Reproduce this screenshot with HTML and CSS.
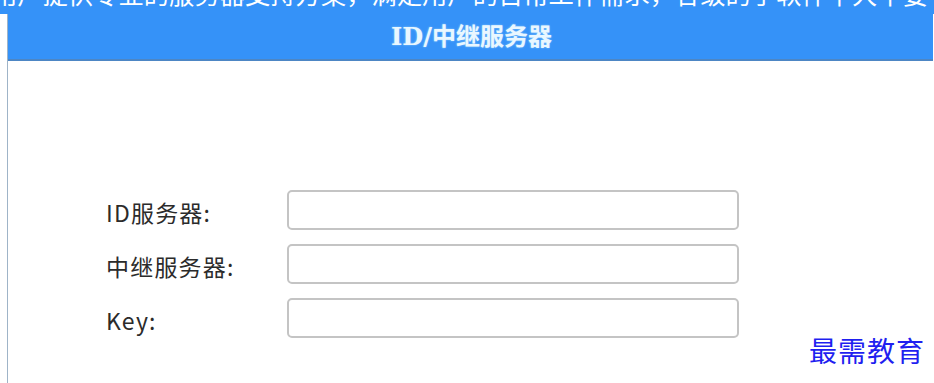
FILE: index.html
```html
<!DOCTYPE html>
<html lang="zh-CN">
<head>
    <meta charset="UTF-8">
    <meta name="viewport" content="width=device-width, initial-scale=1.0">
    <title>ID/中继服务器</title>
    <link rel="stylesheet" href="styles.css">
</head>
<body>
    <div class="intro">
        <p>用户提供专业的服务器支持方案，满足用户的日常工作需求，各级的手软件中大中要</p>
    </div>
    <div class="panel">
        <div class="panel-title">ID/中继服务器</div>
        <form class="server-form">
            <label for="idServer">ID服务器:</label>
            <input type="text" id="idServer" name="idServer">
            <label for="relayServer">中继服务器:</label>
            <input type="text" id="relayServer" name="relayServer">
            <label for="key">Key:</label>
            <input type="text" id="key" name="key">
        </form>
        <div class="watermark">最需教育</div>
    </div>
</body>
</html>
```

FILE: styles.css
```css
body {
    font-family: "Noto Sans CJK SC", "Noto Sans", sans-serif;
    margin: 0;
    padding: 0;
    background-color: #ffffff;
    height: 383px;
    overflow: hidden;
}
.intro {
    background-color: #3592f8;
    height: 14px;
    overflow: hidden;
}
.intro p {
    margin: -25px 0 0 -8px;
    font-size: 25.3px;
    line-height: 36px;
    color: #ffffff;
    white-space: nowrap;
}
.panel {
    position: relative;
    margin: 0 1px 0 7px;
    border-left: 1px solid #9fb4c8;
    height: 369px;
    background-color: #ffffff;
}
.panel-title {
    background-color: #3592f8;
    border-bottom: 2px solid #4d86c4;
    height: 45px;
    line-height: 45px;
    text-align: center;
    font-family: "DejaVu Serif", "Noto Sans CJK SC", serif;
    font-size: 24px;
    font-weight: bold;
    color: #e9f7ff;
    text-shadow: 0 0 2px rgba(190, 235, 255, 0.7);
    padding-left: 2px;
}
.server-form {
    display: grid;
    grid-template-columns: 181px 452px;
    grid-auto-rows: 40px;
    row-gap: 14px;
    align-items: center;
    padding: 129px 0 0 98px;
}
label {
    font-size: 23px;
    letter-spacing: 1.2px;
    color: #2b2b2b;
    padding-top: 4px;
}
input[type="text"] {
    box-sizing: border-box;
    height: 40px;
    width: 452px;
    border: 2px solid #c4c4c4;
    border-radius: 5px;
    background-color: #ffffff;
    padding: 0 10px;
    font-size: 16px;
}
.watermark {
    position: absolute;
    right: 8px;
    top: 318px;
    font-size: 28px;
    color: #1f1ff0;
    letter-spacing: 1px;
    line-height: 1.3;
}
```
